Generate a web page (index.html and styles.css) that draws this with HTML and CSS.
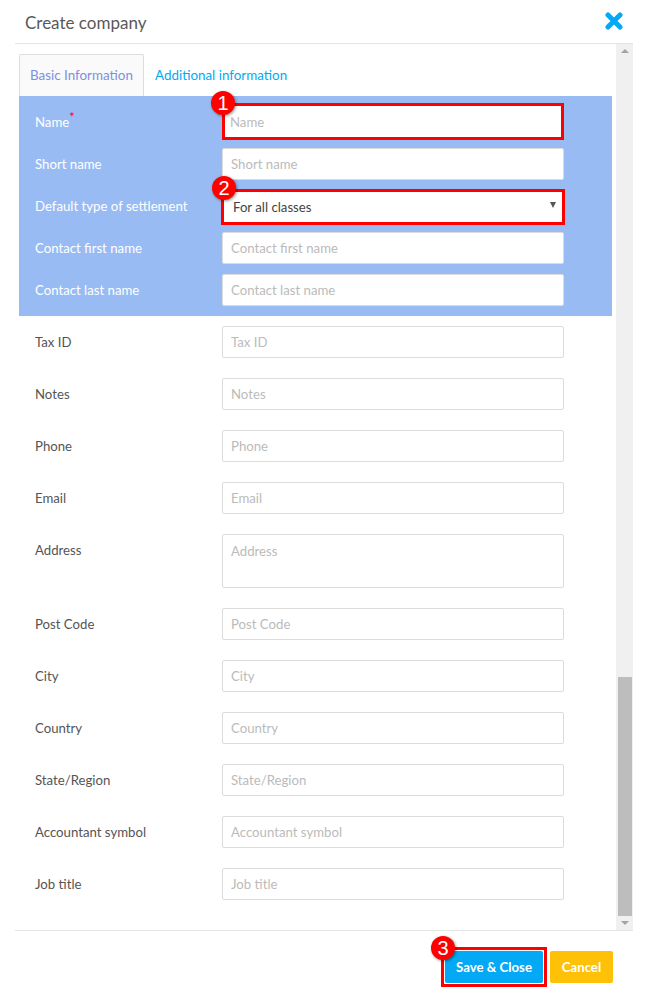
FILE: index.html
```html
<!DOCTYPE html>
<html lang="en">
<head>
<meta charset="utf-8">
<title>Create company</title>
<link rel="stylesheet" href="styles.css">
</head>
<body>
<div class="modal">
  <header class="modal-head">
    <h1 class="modal-title">Create company</h1>
    <svg class="close-icon" viewBox="0 0 18 18" aria-label="Close"><path d="M3 3l12 12M15 3L3 15" /></svg>
  </header>
  <div class="modal-body">
    <div class="scroller">
      <nav class="tabs">
        <span class="tab tab-active">Basic Information</span>
        <span class="tab">Additional information</span>
      </nav>
      <form class="form">
        <section class="highlight">
          <div class="row">
            <label class="label">Name<sup class="req">*</sup></label>
            <input class="field field-name" placeholder="Name">
            <span class="badge badge-1">1</span>
          </div>
          <div class="row">
            <label class="label">Short name</label>
            <input class="field" placeholder="Short name">
          </div>
          <div class="row">
            <label class="label">Default type of settlement</label>
            <div class="field field-select">For all classes<i class="caret"></i></div>
            <span class="badge badge-2">2</span>
          </div>
          <div class="row">
            <label class="label">Contact first name</label>
            <input class="field" placeholder="Contact first name">
          </div>
          <div class="row">
            <label class="label">Contact last name</label>
            <input class="field" placeholder="Contact last name">
          </div>
        </section>
        <section class="plain">
          <div class="row"><label class="label">Tax ID</label><input class="field" placeholder="Tax ID"></div>
          <div class="row"><label class="label">Notes</label><input class="field" placeholder="Notes"></div>
          <div class="row"><label class="label">Phone</label><input class="field" placeholder="Phone"></div>
          <div class="row"><label class="label">Email</label><input class="field" placeholder="Email"></div>
          <div class="row"><label class="label">Address</label><textarea class="field field-area" placeholder="Address"></textarea></div>
          <div class="row"><label class="label">Post Code</label><input class="field" placeholder="Post Code"></div>
          <div class="row"><label class="label">City</label><input class="field" placeholder="City"></div>
          <div class="row"><label class="label">Country</label><input class="field" placeholder="Country"></div>
          <div class="row"><label class="label">State/Region</label><input class="field" placeholder="State/Region"></div>
          <div class="row"><label class="label">Accountant symbol</label><input class="field" placeholder="Accountant symbol"></div>
          <div class="row"><label class="label">Job title</label><input class="field" placeholder="Job title"></div>
        </section>
      </form>
    </div>
    <div class="scrollbar">
      <i class="arrow arrow-up"></i>
      <div class="thumb"></div>
      <i class="arrow arrow-down"></i>
    </div>
  </div>
  <footer class="modal-foot">
    <div class="save-frame">
      <button class="btn btn-save" type="button">Save &amp; Close</button>
      <span class="badge badge-3">3</span>
    </div>
    <button class="btn btn-cancel" type="button">Cancel</button>
  </footer>
</div>
</body>
</html>
```
FILE: styles.css
```css
* { box-sizing: border-box; }
html, body { margin: 0; padding: 0; background: #fff; }
body { font-family: "Lato", "Noto Sans", sans-serif; font-size: 13.2px; color: #555; }

.modal { width: 618px; height: 999px; margin-left: 15px; display: flex; flex-direction: column; }

.modal-head { height: 44px; flex: none; display: flex; align-items: center; justify-content: space-between; padding: 1px 10px 0; border-bottom: 1px solid #e5e5e5; }
.modal-title { margin: 0; font-size: 17px; font-weight: 400; color: #595959; }
.close-icon { width: 18px; height: 18px; margin-top: -2px; fill: none; stroke: #03a9f4; stroke-width: 5; stroke-linecap: round; }

.modal-body { height: 886px; flex: none; display: flex; }
.scroller { width: 601px; padding: 10px 4px 0; overflow: hidden; }

.tabs { display: flex; height: 42px; }
.tab { padding: 0 11px; line-height: 42px; color: #03a9f4; font-size: 13.4px; }
.tab-active { width: 125px; background: #fafafa; border: 1px solid #ddd; border-bottom: 0; border-radius: 2px 2px 0 0; padding: 0 10px; line-height: 40px; color: #7e8fe0; white-space: nowrap; }

.form { width: 593px; display: flex; flex-direction: column; gap: 10px; }
.highlight { background: #98bbf4; padding: 10px 0; display: flex; flex-direction: column; gap: 10px; }
.plain { display: flex; flex-direction: column; gap: 20px; }

.row { display: flex; align-items: flex-start; padding-left: 16px; position: relative; }
.label { width: 187px; flex: none; line-height: 32px; color: #555; }
.highlight .label { color: #fff; }
.req { color: #f00; font-size: 13px; line-height: 0; }

.field { display: block; width: 342px; height: 32px; padding: 0 8px; border: 1px solid #dcdcdc; border-radius: 2px; background: #fff; font: inherit; color: #555; outline: 0; resize: none; }
.field::placeholder { color: #bbb; opacity: 1; }
.field-area { height: 54px; padding-top: 7px; line-height: 18px; }

.highlight .field-name { height: 37px; margin: -3px 0 -2px; border: 3px solid #f00; border-radius: 0; padding: 0 5px; }
.highlight .field-select { width: 344px; height: 36px; margin: -1px -1px -3px -1px; border: 3px solid #f00; border-radius: 0; padding: 0 9px; line-height: 30px; display: flex; justify-content: space-between; align-items: center; color: #444; }
.caret { width: 0; height: 0; margin: -4px -3px 0 0; border: 3px solid transparent; border-top: 6px solid #555; border-bottom: 0; }

.badge { position: absolute; width: 24px; height: 24px; border-radius: 50%; background: #f00; color: #fff; font: 20px/24px "Liberation Sans", sans-serif; text-align: center; box-shadow: 1px 1px 3px rgba(0,0,0,.45); z-index: 2; }
.badge-1 { left: 192px; top: -15px; }
.badge-2 { left: 193px; top: -14px; }
.badge-3 { left: -13px; top: -14px; }

.scrollbar { width: 17px; background: #f0f0f0; display: flex; flex-direction: column; align-items: center; }
.thumb { width: 14px; height: 239px; margin-top: auto; background: #bdbdbd; }
.arrow { width: 0; height: 0; flex: none; border: 4px solid transparent; }
.arrow-up { margin-top: 5px; border-top: 0; border-bottom: 4px solid #a3a3a3; }
.arrow-down { margin: 5px 0; border-bottom: 0; border-top: 4px solid #a3a3a3; }

.modal-foot { flex: 1; border-top: 1px solid #e5e5e5; display: flex; align-items: flex-start; justify-content: flex-end; padding: 16px 20px 0 0; gap: 3px; }
.save-frame { position: relative; border: 3px solid #f00; padding: 1px 0 1px 1px; width: 106px; height: 40px; background: #fff; }
.btn { height: 32px; border: 0; border-radius: 2px; color: #fff; font: 700 13.2px "Lato", sans-serif; padding: 0; }
.btn-save { width: 98px; background: #03a9f4; display: block; }
.btn-cancel { width: 63px; margin-top: 4px; background: #ffc107; }
```
